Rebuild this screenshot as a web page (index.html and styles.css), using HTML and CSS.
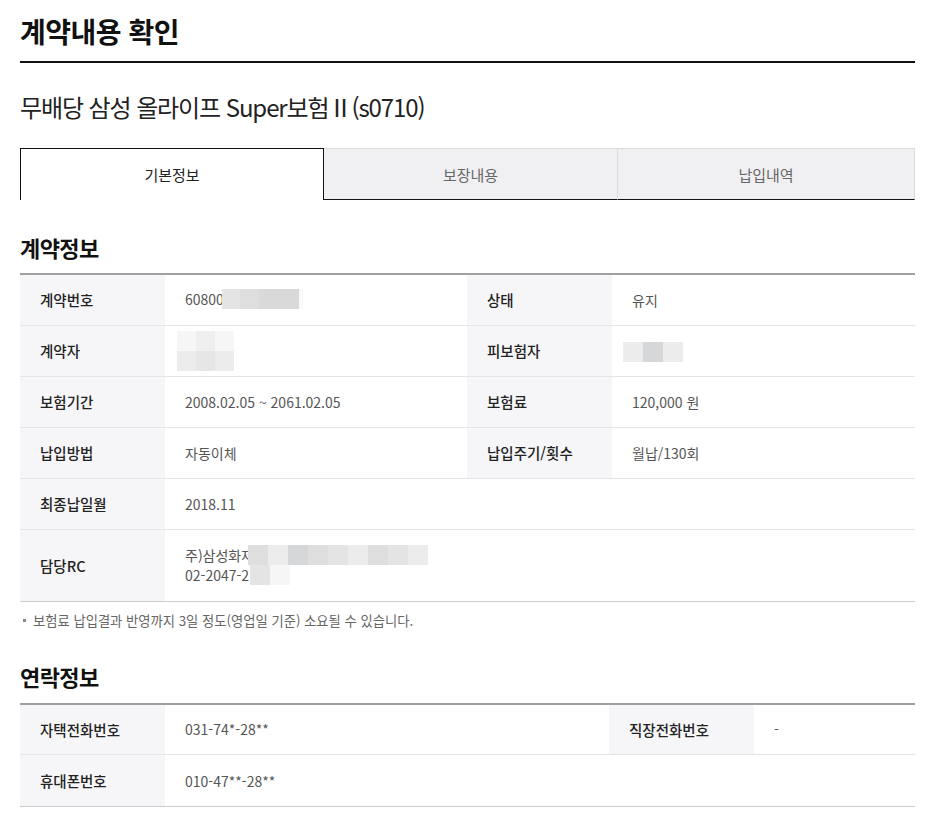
FILE: index.html
```html
<!DOCTYPE html>
<html lang="ko">
<head>
<meta charset="utf-8">
<title>계약내용 확인</title>
<link rel="stylesheet" href="styles.css">
</head>
<body>
<div class="page">
  <h1 class="page-title">계약내용 확인</h1>
  <h2 class="product">무배당 삼성 올라이프 Super보험Ⅱ(s0710)</h2>

  <div class="tabs">
    <div class="tab active">기본정보</div>
    <div class="tab">보장내용</div>
    <div class="tab">납입내역</div>
  </div>

  <h3 class="sec-title">계약정보</h3>
  <table class="info">
    <colgroup><col class="c-th"><col class="c-td1"><col class="c-th"><col></colgroup>
    <tr>
      <th>계약번호</th>
      <td><span class="inl">60800</span><span class="mosaic m-no"><i class="g1"></i><i class="g2"></i><i class="g3"></i><i class="g3"></i><i class="g0"></i></span></td>
      <th>상태</th>
      <td>유지</td>
    </tr>
    <tr>
      <th>계약자</th>
      <td><span class="mosaic m-name"><i class="s1"></i><i class="s2"></i><i class="s1"></i><i class="s3"></i><i class="s4"></i><i class="s3"></i></span></td>
      <th>피보험자</th>
      <td><span class="mosaic m-ins"><i class="s3"></i><i class="g4"></i><i class="s3"></i></span></td>
    </tr>
    <tr>
      <th>보험기간</th>
      <td>2008.02.05 ~ 2061.02.05</td>
      <th>보험료</th>
      <td>120,000 원</td>
    </tr>
    <tr>
      <th>납입방법</th>
      <td>자동이체</td>
      <th>납입주기/횟수</th>
      <td>월납/130회</td>
    </tr>
    <tr>
      <th>최종납일월</th>
      <td colspan="3">2018.11</td>
    </tr>
    <tr class="tall">
      <th>담당RC</th>
      <td colspan="3">
        <div class="line">주)삼성화재<span class="mosaic m-rc"><i class="g2"></i><i class="s3"></i><i class="g4"></i><i class="g2"></i><i class="g1"></i><i class="s3"></i><i class="g2"></i><i class="g1"></i><i class="s3"></i></span></div>
        <div class="line">02-2047-2<span class="mosaic m-tel"><i class="g1"></i><i class="s1"></i></span></div>
      </td>
    </tr>
  </table>
  <p class="note">보험료 납입결과 반영까지 3일 정도(영업일 기준) 소요될 수 있습니다.</p>

  <h3 class="sec-title contact">연락정보</h3>
  <table class="info contact-table">
    <colgroup><col class="c-th"><col class="c-td2"><col class="c-th"><col></colgroup>
    <tr>
      <th>자택전화번호</th>
      <td>031-74*-28**</td>
      <th>직장전화번호</th>
      <td>-</td>
    </tr>
    <tr>
      <th>휴대폰번호</th>
      <td colspan="3">010-47**-28**</td>
    </tr>
  </table>
</div>
</body>
</html>
```

FILE: styles.css
```css
* { box-sizing: border-box; }
html, body { margin: 0; padding: 0; background: #fff; }
body {
  font-family: "Noto Sans CJK KR", "Noto Sans", sans-serif;
  color: #222;
}
.page { padding: 0 22px 0 20px; }

.page-title {
  margin: 13px 0 0;
  padding-bottom: 12px;
  font-size: 28px;
  line-height: 36px;
  font-weight: 700;
  color: #111;
  border-bottom: 2px solid #111;
  letter-spacing: -0.5px;
}
.product {
  margin: 27px 0 0;
  font-size: 24px;
  line-height: 34px;
  font-weight: 400;
  color: #222;
  letter-spacing: -1.1px;
}

.tabs {
  display: grid;
  grid-template-columns: 304px 294px 1fr;
  margin-top: 24px;
  height: 52px;
}
.tab {
  display: flex;
  align-items: center;
  justify-content: center;
  font-size: 15px;
  color: #666;
  background: #f0f0f2;
  border-top: 1px solid #dcdcdc;
  border-right: 1px solid #dcdcdc;
  border-bottom: 1px solid #111;
}
.tab.active {
  background: #fff;
  color: #222;
  border: 1px solid #111;
  border-bottom: 0;
}

.sec-title {
  margin: 32px 0 11px;
  font-size: 22px;
  line-height: 30px;
  font-weight: 700;
  color: #111;
  letter-spacing: -0.6px;
}
.sec-title.contact { margin-top: 30px; margin-bottom: 12px; }

.info {
  width: 100%;
  border-collapse: collapse;
  table-layout: fixed;
  border-top: 2px solid #a0a0a0;
  border-bottom: 1px solid #ccc;
}
.c-th { width: 145px; }
.c-td1 { width: 302px; }
.c-td2 { width: 444px; }
.info th, .info td {
  height: 51px;
  padding: 0 20px;
  text-align: left;
  vertical-align: middle;
  border-bottom: 1px solid #e5e5e5;
}
.info tr:last-child th, .info tr:last-child td { border-bottom: 0; }
.contact-table tr:last-child th, .contact-table tr:last-child td { height: 52px; }
.info th {
  background: #f6f6f8;
  font-size: 14.5px;
  font-weight: 500;
  color: #222;
}
.info td { color: #555; font-weight: 400; font-size: 14px; }
.info tr.tall td, .info tr.tall th { height: 72px; }
.line { line-height: 20px; white-space: nowrap; }

.mosaic {
  display: inline-grid;
  vertical-align: middle;
  grid-auto-rows: 20px;
}
.mosaic i { display: block; }
.m-no { grid-template-columns: 18px 19px 20px 20px 4px; margin-left: -2px; position: relative; top: -2px; }
.m-name { grid-template-columns: repeat(3, 19px); margin-left: -8px; }
.m-ins { grid-template-columns: repeat(3, 20px); margin-left: -9px; }
.m-rc { grid-template-columns: repeat(9, 20px); margin-left: -6px; vertical-align: top; }
.m-tel { grid-template-columns: 20px 20px; margin-left: 1px; vertical-align: top; }

.g0 { background: #f7f9fb; }
.g1 { background: #e4e4e4; }
.g2 { background: #dedede; }
.g3 { background: #d9d9d9; }
.g4 { background: #d6d7d9; }
.s1 { background: #f6f6f6; }
.s2 { background: #efefef; }
.s3 { background: #ececec; }
.s4 { background: #e6e6e6; }

.note {
  margin: 9px 0 0;
  font-size: 13.3px;
  line-height: 20px;
  color: #666;
  padding-left: 13px;
  position: relative;
}
.note::before {
  content: "";
  position: absolute;
  left: 3px;
  top: 8px;
  width: 3px;
  height: 3px;
  background: #888;
}
```
